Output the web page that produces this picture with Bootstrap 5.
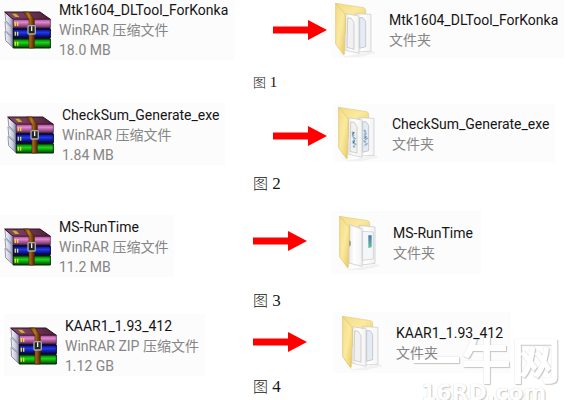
<!DOCTYPE html>
<html lang="zh-CN">
<head>
<meta charset="utf-8">
<meta name="viewport" content="width=device-width, initial-scale=1">
<title>WinRAR 压缩文件</title>
<link href="https://cdn.jsdelivr.net/npm/bootstrap@5.3.0/dist/css/bootstrap.min.css" rel="stylesheet">
<style>
body{background:#fff;color:#151515;font:14px/20px Roboto,"Noto Sans CJK SC",sans-serif}
.symbols{width:0;height:0}
.step{display:grid;grid-template-columns:253fr 78fr 236fr;align-items:start}
.entry{background:#fcfcfc;white-space:nowrap;width:fit-content;padding:2px 6px 0 4px}
.entry .info{color:#858585}
.books{width:48px;height:40px;margin-right:7px}
.folder{width:42px;height:56px;margin-right:12px}
.arrow{width:54px;height:20px;margin-top:20px}
.caption-line{grid-column:2 / span 2;font:17px/20px "Liberation Serif","Noto Sans CJK SC",serif}
.caption-line span{font-family:"Noto Sans CJK SC",sans-serif;font-weight:300;font-size:15px}
.step-1 .archive{padding-top:0}
.step-1 .caption-line{font-size:15px;margin-top:12px}
.step-1 .caption-line span{font-size:13px}
.step-2{margin-top:11px}
.step-2 .archive{padding-left:7px}
.step-2 .target{margin:1px 0 0 3px}
.step-2 .arrow{margin-top:23px}
.step-2 .caption-line{margin-top:8px}
.step-3{margin-top:17px}
.step-3 .archive{margin-top:4px}
.step-3 .target{padding:4px 8px 3px}
.step-3 .caption-line{margin-top:13px}
.step-4{margin-top:1px;padding-bottom:4px}
.step-4 .archive{padding-left:6px;margin:2px 0 0 4px}
.step-4 .target{padding:3px 8px 2px;margin-left:3px}
.watermark{position:absolute;left:411px;top:333px;color:#fff;text-shadow:1px 1px 1px #c4c4c4,0 0 1px #ccc}
.watermark-cn{font:bold 50px/48px "Noto Sans CJK SC",sans-serif}
.watermark-site{font:bold 22px/24px "DejaVu Sans",sans-serif;padding-left:10px}
</style>
</head>
<body>
<svg class="symbols position-absolute" aria-hidden="true">
  <defs>
    <linearGradient id="cover" x1="0" x2="1"><stop offset="0" stop-color="#8a4a6a"/><stop offset=".5" stop-color="#6f3654"/><stop offset="1" stop-color="#4b2038"/></linearGradient>
    <linearGradient id="pink" x2="0" y2="1"><stop offset="0" stop-color="#a04890"/><stop offset=".35" stop-color="#e28ad2"/><stop offset="1" stop-color="#6d285c"/></linearGradient>
    <linearGradient id="blue" x2="0" y2="1"><stop offset="0" stop-color="#0a0a70"/><stop offset=".4" stop-color="#2038f0"/><stop offset="1" stop-color="#000048"/></linearGradient>
    <linearGradient id="green" x2="0" y2="1"><stop offset="0" stop-color="#067006"/><stop offset=".4" stop-color="#18d818"/><stop offset="1" stop-color="#034003"/></linearGradient>
    <linearGradient id="leaf"><stop offset="0" stop-color="#f8f8ff"/><stop offset=".6" stop-color="#c4c6dc"/><stop offset="1" stop-color="#70748c"/></linearGradient>
    <linearGradient id="strap"><stop offset="0" stop-color="#5e2e04"/><stop offset=".5" stop-color="#c07820"/><stop offset="1" stop-color="#4c2402"/></linearGradient>
    <linearGradient id="yellow" x2="1" y2="1"><stop offset="0" stop-color="#f2dc86"/><stop offset=".5" stop-color="#fbe99f"/><stop offset="1" stop-color="#e8c95e"/></linearGradient>
    <linearGradient id="sheet"><stop offset="0" stop-color="#e6e6e6"/><stop offset=".4" stop-color="#fff"/><stop offset="1" stop-color="#f3f3f3"/></linearGradient>
    <linearGradient id="meter" x2="0" y2="1"><stop offset="0" stop-color="#4a75b8"/><stop offset="1" stop-color="#65c58a"/></linearGradient>
  </defs>
  <symbol id="books" viewBox="0 0 144 120">
    <path d="M3 64 28 86V114L5 92ZM3 35 28 57V84L5 61ZM3 7 28 30V54L5 32Z" fill="url(#leaf)" stroke="#63667c" stroke-width="2"/>
    <path d="M2 6H108L139 28H28Z" fill="url(#cover)" stroke="#2c1020" stroke-width="3"/>
    <path d="M28 28H139V53H28Z" fill="url(#pink)" stroke="#381028" stroke-width="2"/>
    <path d="M28 57H139V83H28Z" fill="url(#blue)" stroke="#000030" stroke-width="3"/>
    <path d="M28 87H139V114H28Z" fill="url(#green)" stroke="#022a02" stroke-width="3"/>
    <path d="M26 53H139V57H26ZM26 83H139V87H26Z" fill="#151020"/>
    <path d="M24 11H36L46 21H34Z" fill="#c2b62a"/>
    <path d="M34 36V48M41 36V48M34 65V77M41 65V77M34 95V107M41 95V107" stroke="#e9dc33" stroke-width="4"/>
    <path d="M58 6H74L91 28V114H75V28Z" fill="url(#strap)" stroke="#482504" stroke-width="2"/>
    <rect x="72" y="47" width="22" height="25" rx="3" fill="#262626" stroke="#aaa" stroke-width="4"/>
    <path d="M83 49V63" stroke="#eee" stroke-width="4"/>
  </symbol>
  <symbol id="folder-back" viewBox="0 0 126 168">
    <path d="M8 152 34 163 114 147 122 154 70 166H30Z" fill="#f1f1f1"/>
    <path d="M2 4 86 17Q92 19 92 25V60L30 70Z" fill="url(#yellow)" stroke="#e2cc80" stroke-width="2"/>
  </symbol>
  <symbol id="folder-front" viewBox="0 0 126 168">
    <path d="M2 4 29 35Q31 37 31 42V94L28 100V156Q27 159 24 156L5 130Q2 127 2 123Z" fill="url(#yellow)" stroke="#dec268" stroke-width="2"/>
  </symbol>
  <symbol id="folder-docs" viewBox="0 0 126 168">
    <use href="#folder-back"/>
    <path d="M62 35 108 37V148L62 150Z" fill="url(#sheet)" stroke="#c8c8c8" stroke-width="2"/>
    <path d="M74 47H84L92 58V134L74 139Z" fill="#e6ebf3" stroke="#adb4c0" stroke-width="2"/>
    <path d="M32 35 72 42V154L29 144Z" fill="url(#sheet)" stroke="#c8c8c8" stroke-width="2"/>
    <path d="M38 48H48L57 62V142L36 136Z" fill="#f1f1f1" stroke="#bdbdbd" stroke-width="2"/>
    <use href="#folder-front"/>
  </symbol>
  <symbol id="folder-gears" viewBox="0 0 126 168">
    <use href="#folder-docs"/>
    <path d="M42 78 49 84 43 92 51 98 45 108 52 115 46 124M78 72 85 80 78 88 87 96 79 105 86 113 79 121" fill="none" stroke="#8fb0c8" stroke-width="6" stroke-dasharray="8 3"/>
    <path d="M49 78 43 86M84 92 78 98M50 104 45 112" stroke="#3d5f80" stroke-width="3"/>
  </symbol>
  <symbol id="folder-app" viewBox="0 0 126 168">
    <use href="#folder-back"/>
    <path d="M60 31 108 36V145L60 151Z" fill="url(#sheet)" stroke="#bfc3c8" stroke-width="2"/>
    <path d="M70 49 103 51V132L70 136Z" fill="#f4f7fa" stroke="#c0c8d0" stroke-width="2"/>
    <path d="M88 61H98V97L88 99Z" fill="url(#meter)"/>
    <path d="M32 29 69 42V154L29 144Z" fill="url(#sheet)" stroke="#c4c4c4" stroke-width="2"/>
    <use href="#folder-front"/>
    <path d="M31 76 35 80V91L31 94Z" fill="#888"/>
  </symbol>
  <symbol id="arrow" viewBox="0 0 54 20"><path d="M0 6.500H35V0L54 10 35 20V13.500H0Z" fill="#f00"/></symbol>
</svg>
<main class="position-relative overflow-hidden">
  <section class="step step-1">
    <div class="entry archive d-flex align-items-center"><svg class="books"><use href="#books"/></svg><div><div>Mtk1604_DLTool_ForKonka</div><div class="info">WinRAR 压缩文件</div><div class="info">18.0 MB</div></div></div>
    <svg class="arrow ms-auto me-1"><use href="#arrow"/></svg>
    <div class="entry target d-flex align-items-center"><svg class="folder"><use href="#folder-docs"/></svg><div><div>Mtk1604_DLTool_ForKonka</div><div class="info">文件夹</div></div></div>
    <div class="caption-line"><span>图</span> 1</div>
  </section>
  <section class="step step-2">
    <div class="entry archive d-flex align-items-center"><svg class="books"><use href="#books"/></svg><div><div>CheckSum_Generate_exe</div><div class="info">WinRAR 压缩文件</div><div class="info">1.84 MB</div></div></div>
    <svg class="arrow ms-auto me-1"><use href="#arrow"/></svg>
    <div class="entry target d-flex align-items-center"><svg class="folder"><use href="#folder-gears"/></svg><div><div>CheckSum_Generate_exe</div><div class="info">文件夹</div></div></div>
    <div class="caption-line"><span>图</span> 2</div>
  </section>
  <section class="step step-3">
    <div class="entry archive d-flex align-items-center"><svg class="books"><use href="#books"/></svg><div><div>MS-RunTime</div><div class="info">WinRAR 压缩文件</div><div class="info">11.2 MB</div></div></div>
    <svg class="arrow"><use href="#arrow"/></svg>
    <div class="entry target d-flex align-items-center"><svg class="folder"><use href="#folder-app"/></svg><div><div>MS-RunTime</div><div class="info">文件夹</div></div></div>
    <div class="caption-line"><span>图</span> 3</div>
  </section>
  <section class="step step-4">
    <div class="entry archive d-flex align-items-center"><svg class="books"><use href="#books"/></svg><div><div>KAAR1_1.93_412</div><div class="info">WinRAR ZIP 压缩文件</div><div class="info">1.12 GB</div></div></div>
    <svg class="arrow"><use href="#arrow"/></svg>
    <div class="entry target d-flex align-items-center"><svg class="folder"><use href="#folder-docs"/></svg><div class="position-relative z-1"><div>KAAR1_1.93_412</div><div class="info">文件夹</div></div></div>
    <div class="caption-line"><span>图</span> 4</div>
  </section>
  <div class="watermark"><div class="watermark-cn">一牛网</div><div class="watermark-site">16RD.com</div></div>
</main>
<script src="https://cdn.jsdelivr.net/npm/bootstrap@5.3.0/dist/js/bootstrap.bundle.min.js"></script>
</body>
</html>
